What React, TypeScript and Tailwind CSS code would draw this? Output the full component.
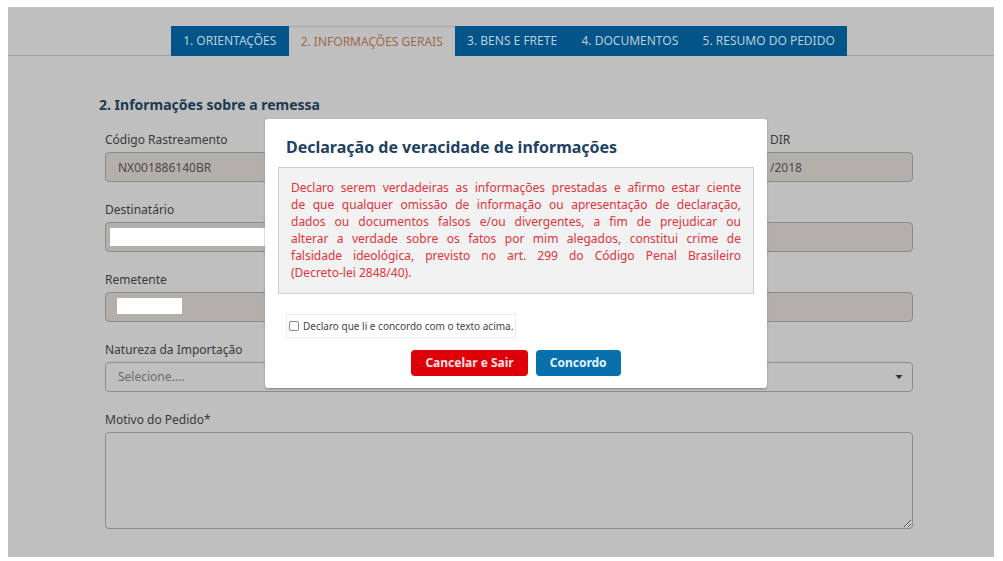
import React from "react";

const tabs = [
  { label: "1. ORIENTAÇÕES", active: false },
  { label: "2. INFORMAÇÕES GERAIS", active: true },
  { label: "3. BENS E FRETE", active: false },
  { label: "4. DOCUMENTOS", active: false },
  { label: "5. RESUMO DO PEDIDO", active: false },
];

const declarationLines = [
  "Declaro serem verdadeiras as informações prestadas e afirmo estar ciente",
  "de que qualquer omissão de informação ou apresentação de declaração,",
  "dados ou documentos falsos e/ou divergentes, a fim de prejudicar ou",
  "alterar a verdade sobre os fatos por mim alegados, constitui crime de",
  "falsidade ideológica, previsto no art. 299 do Código Penal Brasileiro",
];

const labelClass = "block text-xs leading-4 text-[#3a3a3a]";
const fieldClass =
  "block h-[30px] w-full rounded border border-[#8c8c8c] bg-[#b3b0ac] px-3 text-xs text-[#4a4a4a] outline-none";

type FieldProps = {
  id: string;
  label: string;
  value?: string;
  mask?: string;
};

function Field({ id, label, value = "", mask }: FieldProps) {
  return (
    <div className="flex flex-col gap-1">
      <label htmlFor={id} className={labelClass}>
        {label}
      </label>
      <div className="relative">
        <input id={id} className={fieldClass} defaultValue={value} readOnly />
        {mask && <span className={mask} />}
      </div>
    </div>
  );
}

function Tabs() {
  return (
    <nav className="flex pt-[19px]">
      <div className="w-[163px] shrink-0 border-b border-[#a3a3a3]" />
      <div className="flex flex-1">
        {tabs.map((tab) => (
          <a
            key={tab.label}
            href="#"
            className={
              tab.active
                ? "flex h-[30px] grow items-center justify-center border-t border-[#a8a8a8] text-xs whitespace-nowrap text-[#a0694a]"
                : "flex h-[30px] grow items-center justify-center bg-[#035488] text-xs whitespace-nowrap text-[#b9cfdd]"
            }
          >
            {tab.label}
          </a>
        ))}
      </div>
      <div className="w-[147px] shrink-0 border-b border-[#a3a3a3]" />
    </nav>
  );
}

function Declaration() {
  return (
    <div className="absolute inset-x-0 top-28 pr-[227px] pl-[257px]">
      <section
        role="dialog"
        aria-labelledby="dialog-title"
        className="rounded-[3px] bg-white px-[13px] pt-4 pb-3 shadow-[0_1px_2px_#808080]"
      >
        <h2 id="dialog-title" className="pl-2 text-base leading-6 font-bold text-[#1d4263]">
          Declaração de veracidade de informações
        </h2>
        <p className="mt-2 border border-[#cccccc] bg-[#f2f2f2] px-3 pt-[11px] pb-[12px] text-xs leading-[17px] text-[#e0343c]">
          {declarationLines.map((line) => (
            <span key={line} className="block text-justify [text-align-last:justify]">
              {line}{" "}
            </span>
          ))}
          (Decreto-lei 2848/40).
        </p>
        <label className="mt-5 ml-2 flex h-6 w-fit items-center gap-1 border border-[#ececec] px-[2px] text-[10px] text-[#444444]">
          <input
            type="checkbox"
            className="h-[10px] w-[10px] appearance-none rounded-[2px] border border-[#8a8a8a] bg-white"
          />
          Declaro que li e concordo com o texto acima.
        </label>
        <div className="mt-3 flex justify-center gap-2">
          <button className="h-[26px] rounded bg-[#dd0009] px-[14px] text-xs font-bold text-[#ffe3e3]">
            Cancelar e Sair
          </button>
          <button className="h-[26px] rounded bg-[#0870ad] px-[14px] text-xs font-bold text-[#e4f3fc]">
            Concordo
          </button>
        </div>
      </section>
    </div>
  );
}

export default function App() {
  return (
    <div className="bg-white pt-[7px] pr-[9px] pb-[5px] pl-2 font-['Noto_Sans',sans-serif]">
      <main className="relative bg-[#bfbfbf] pb-7">
        <Tabs />
        <form className="pr-[81px] pl-[97px]">
          <h1 className="-ml-[6px] pt-[39px] text-sm leading-5 font-bold text-[#20394f]">
            2. Informações sobre a remessa
          </h1>
          <div className="mt-[17px] flex flex-col gap-5">
            <div className="flex gap-6">
              <div className="flex-1">
                <Field id="codigo" label="Código Rastreamento" value="NX001886140BR" />
              </div>
              <div className="w-[156px]">
                <div className="flex flex-col gap-1">
                  <label htmlFor="dir" className={labelClass + " pl-[13px]"}>
                    DIR
                  </label>
                  <input id="dir" className={fieldClass} defaultValue="/2018" readOnly />
                </div>
              </div>
            </div>
            <Field
              id="destinatario"
              label="Destinatário"
              mask="absolute top-[6px] left-[5px] h-[18px] w-[200px] bg-white"
            />
            <Field
              id="remetente"
              label="Remetente"
              mask="absolute top-[6px] left-3 h-4 w-[65px] bg-white"
            />
            <div className="flex flex-col gap-1">
              <label htmlFor="natureza" className={labelClass}>
                Natureza da Importação
              </label>
              <div className="relative">
                <select
                  id="natureza"
                  className="block h-[30px] w-full appearance-none rounded border border-[#8c8c8c] bg-[#bfbfbf] px-3 text-xs text-[#6c6c6c] outline-none"
                >
                  <option>Selecione....</option>
                </select>
                <svg
                  viewBox="0 0 8 4"
                  className="pointer-events-none absolute top-[13px] right-[10px] h-1 w-2"
                  fill="#333333"
                >
                  <path d="M0.5 0h7L4.6 3.6q-.6.6-1.2 0z" />
                </svg>
              </div>
            </div>
            <div className="flex flex-col gap-1">
              <label htmlFor="motivo" className={labelClass}>
                Motivo do Pedido*
              </label>
              <textarea
                id="motivo"
                className="block h-[97px] w-full rounded border border-[#8c8c8c] bg-[#bfbfbf] p-3 text-xs outline-none"
              />
            </div>
          </div>
        </form>
        <Declaration />
      </main>
    </div>
  );
}
